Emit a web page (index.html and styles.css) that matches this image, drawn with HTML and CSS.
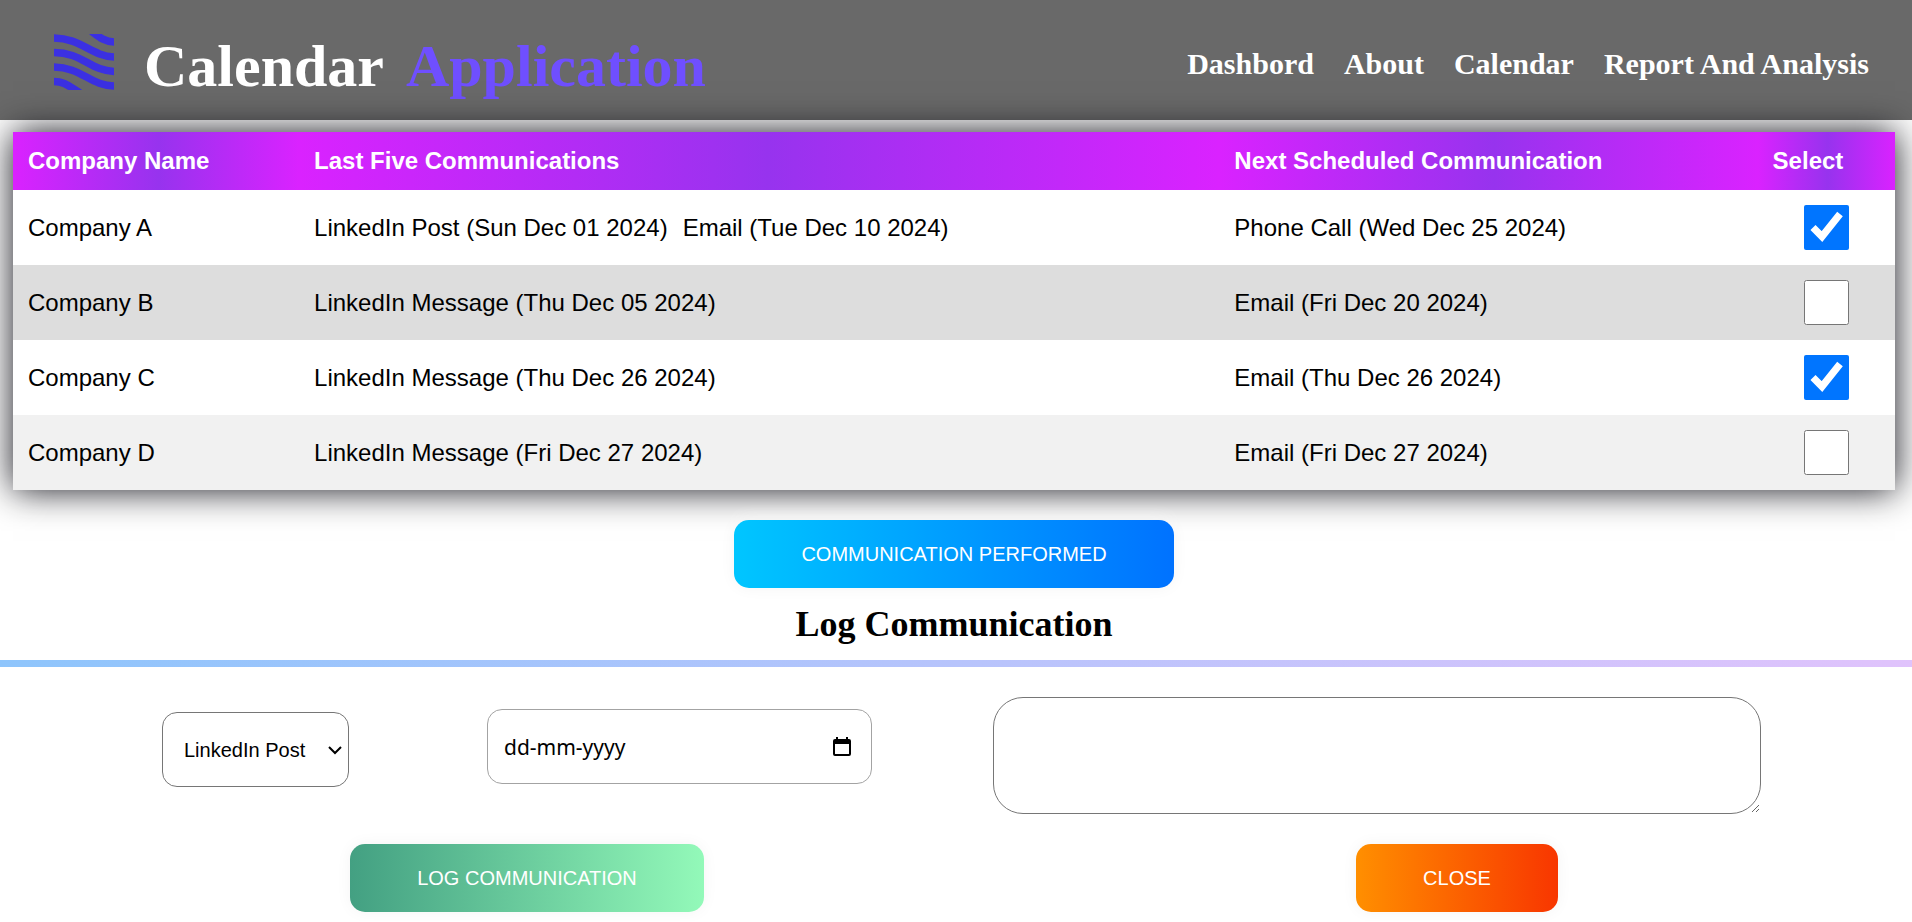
FILE: index.html
```html
<!DOCTYPE html>
<html lang="en">
<head>
<meta charset="utf-8">
<title>Calendar Application</title>
<link rel="stylesheet" href="styles.css">
</head>
<body>
<header class="topbar">
  <div class="brand">
    <svg class="brand-logo" viewBox="0 0 60 56" aria-hidden="true">
      <g fill="none" stroke="#3b30e2" stroke-width="7.500">
        <path d="M-1 4C28 4 36 22 61 23"/>
        <path d="M-1 18.500C28 18 36 37 61 37.500"/>
        <path d="M-1 33C28 33 36 52 61 52"/>
        <path d="M-1 47.500C10 47 16 53 26 59"/>
        <path d="M36 -4C44 2 50 8 61 8"/>
      </g>
    </svg>
    <h1 class="brand-name">Calendar <span class="brand-accent">Application</span></h1>
  </div>
  <nav class="nav">
    <a href="#dashboard">Dashbord</a>
    <a href="#about">About</a>
    <a href="#calendar">Calendar</a>
    <a href="#report">Report And Analysis</a>
  </nav>
</header>
<main>
  <section class="overview">
    <table class="companies">
      <colgroup><col class="col-name"><col class="col-last"><col class="col-next"><col class="col-select"></colgroup>
      <thead>
        <tr><th scope="col">Company Name</th><th scope="col">Last Five Communications</th><th scope="col">Next Scheduled Communication</th><th scope="col">Select</th></tr>
      </thead>
      <tbody>
        <tr><td>Company A</td><td><span class="entry">LinkedIn Post (Sun Dec 01 2024)</span><span class="entry">Email (Tue Dec 10 2024)</span></td><td>Phone Call (Wed Dec 25 2024)</td><td><input class="pick" type="checkbox" aria-label="Select Company A" checked></td></tr>
        <tr class="overdue"><td>Company B</td><td><span class="entry">LinkedIn Message (Thu Dec 05 2024)</span></td><td>Email (Fri Dec 20 2024)</td><td><input class="pick" type="checkbox" aria-label="Select Company B"></td></tr>
        <tr><td>Company C</td><td><span class="entry">LinkedIn Message (Thu Dec 26 2024)</span></td><td>Email (Thu Dec 26 2024)</td><td><input class="pick" type="checkbox" aria-label="Select Company C" checked></td></tr>
        <tr class="even"><td>Company D</td><td><span class="entry">LinkedIn Message (Fri Dec 27 2024)</span></td><td>Email (Fri Dec 27 2024)</td><td><input class="pick" type="checkbox" aria-label="Select Company D"></td></tr>
      </tbody>
    </table>
    <button class="btn btn-blue" type="button">COMMUNICATION PERFORMED</button>
    <h2 class="title">Log Communication</h2>
  </section>
  <form class="log">
    <div class="fields">
      <div class="kind-box">
        <select class="kind" aria-label="Communication type">
          <option>LinkedIn Post</option>
          <option>Email</option>
        </select>
        <svg class="kind-arrow" viewBox="0 0 14 10" aria-hidden="true"><path d="M1 2l6 6 6-6" fill="none" stroke="#000" stroke-width="2"/></svg>
      </div>
      <div class="date">
        <input class="date-text" type="text" placeholder="dd-mm-yyyy" aria-label="Communication date">
        <button class="date-open" type="button" aria-label="Open date picker">
          <svg class="date-icon" viewBox="0 0 18 20" aria-hidden="true"><path fill="#000" fill-rule="evenodd" d="M3 0h2v2h8V0h2v2h1q2 0 2 2v13q0 2-2 2H2q-2 0-2-2V4q0-2 2-2h1zM2 7V16.500q0 .5 .5 .5h13q.5 0 .5-.5V7z"/></svg>
        </button>
      </div>
      <textarea class="notes" aria-label="Notes"></textarea>
    </div>
    <div class="actions">
      <button class="btn btn-green" type="button">LOG COMMUNICATION</button>
      <button class="btn btn-orange" type="button">CLOSE</button>
    </div>
  </form>
</main>
</body>
</html>
```
FILE: styles.css
```css
* { box-sizing: border-box; }
body { margin: 0; background: #fff; color: #000; font-family: "Liberation Serif", "Times New Roman", serif; }
.topbar { display: flex; justify-content: space-between; align-items: center; min-height: 120px; padding: 0 43px 0 54px; background: #696969; color: #fff; }
.brand { display: flex; align-items: center; gap: 30px; padding-top: 3px; }
.brand-logo { width: 60px; height: 56px; overflow: hidden; }
.brand-name { margin: 0; padding-top: 8px; font-size: 60px; line-height: 68px; font-weight: bold; }
.brand-accent { margin-left: 8px; color: #6f4fff; }
.nav { display: flex; gap: 30px; padding-top: 8px; }
.nav a { color: #fff; font-size: 30px; line-height: 34px; font-weight: bold; text-decoration: none; }

.overview { display: flex; flex-direction: column; align-items: center; padding: 12px 17px 0 13px; }
.companies { width: 100%; table-layout: fixed; border-collapse: separate; border-spacing: 0; font: 24px/28px "Liberation Sans", Arial, sans-serif; background: #fff; box-shadow: 0 0 34px rgba(0, 0, 10, .92); }
.col-name { width: 15.2%; }
.col-last { width: 48.9%; }
.col-next { width: 28.6%; }
.col-select { width: 7.3%; }
.companies th { height: 58px; padding: 0 15px; text-align: left; color: #fff; background: linear-gradient(to right, #da22ff 0%, #9733ee 51%, #da22ff 100%); }
.companies td { height: 75px; padding: 0 15px; }
.overdue { background: #ddd; }
.even { background: #f1f1f1; }
.entry { margin-right: 15px; }
.pick { display: block; width: 45px; height: 45px; margin: 0 0 0 31px; }

.btn { height: 68px; padding: 0 67px; border: 0; border-radius: 15px; color: #fff; font: 20px "Liberation Sans", Arial, sans-serif; box-shadow: 0 0 16px #f4f4f4; }
.btn-blue { margin-top: 30px; background: linear-gradient(to right, #00c6ff 0%, #0072ff 100%); }
.btn-green { background: linear-gradient(to right, #43a082 0%, #93f9b9 100%); }
.btn-orange { background: linear-gradient(to right, #ff8f00 0%, #f83600 100%); }
.title { margin: 15px 0; font-size: 36px; line-height: 42px; }

.log { border-top: 7px solid; border-image: linear-gradient(to right, #8ec5fc, #e0c3fc) 1; padding-bottom: 9px; }
.fields { display: grid; grid-template-columns: 325fr 506fr 768fr; align-items: start; padding: 30px 151px 0 162px; }
.kind-box { display: grid; align-items: center; justify-items: end; width: 187px; margin-top: 15px; }
.kind, .kind-arrow { grid-area: 1 / 1; }
.kind { appearance: none; width: 100%; height: 75px; padding: 0 0 0 21px; border: 1px solid #767676; border-radius: 15px; background: #fff; color: #000; font: 20px "Liberation Sans", Arial, sans-serif; }
.kind-arrow { width: 14px; height: 10px; margin-right: 7px; pointer-events: none; }
.date { display: flex; align-items: center; width: 76%; height: 75px; margin-top: 12px; padding: 0 20px 0 16px; border: 1px solid #a3a3a3; border-radius: 15px; }
.date-text { flex: 1; min-width: 0; padding: 0; border: 0; background: none; color: #000; font: 21px "Noto Sans", sans-serif; }
.date-text::placeholder { color: #000; opacity: 1; }
.date-open { padding: 0; border: 0; background: none; }
.date-icon { display: block; width: 18px; height: 20px; }
.notes { width: 100%; height: 117px; padding: 20px; border: 1px solid #767676; border-radius: 30px; }
.actions { display: grid; grid-template-columns: 1054fr 806fr; justify-items: center; padding: 30px 52px 0 0; }
```
